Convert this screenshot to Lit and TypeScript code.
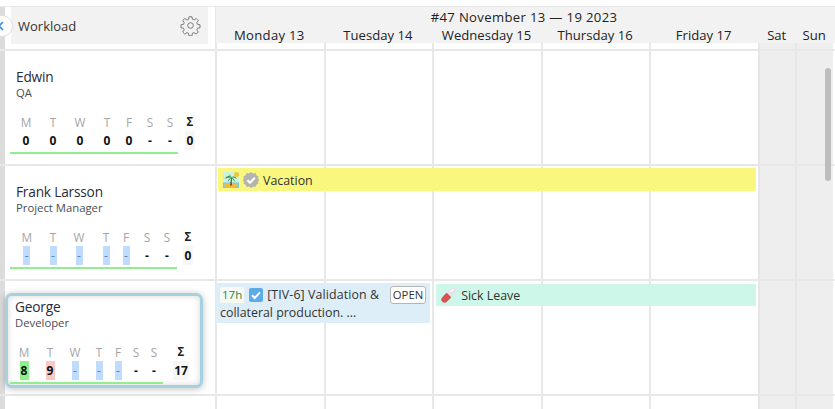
import { LitElement, html, css, svg } from "lit";
import { customElement } from "lit/decorators.js";

interface Person {
  name: string;
  role: string;
  cols: number[];
  lineWidth: number;
  vals: { v: string; k: string }[];
  sum: string;
}
const dash = { v: "-", k: "" };
const off = { v: "-", k: "off" };
const zero = { v: "0", k: "" };
const people: Person[] = [
  { name: "Edwin", role: "QA", cols: [27, 27, 27, 27, 17, 25, 15, 25], lineWidth: 168, vals: [zero, zero, zero, zero, zero, dash, dash], sum: "0" },
  { name: "Frank Larsson", role: "Project Manager", cols: [28.5, 24, 28, 26, 14, 28, 12, 30], lineWidth: 167, vals: [off, off, off, off, off, dash, dash], sum: "0" },
  { name: "George", role: "Developer", cols: [28, 24, 26, 22, 16, 20, 16, 38], lineWidth: 153, vals: [{ v: "8", k: "good" }, { v: "9", k: "bad" }, off, off, off, dash, dash], sum: "17" },
];
const letters = ["M", "T", "W", "T", "F", "S", "S"];
const days = ["Monday 13", "Tuesday 14", "Wednesday 15", "Thursday 16", "Friday 17"];

const palm = svg`<svg class="emoji" viewBox="0 0 16 16"><rect width="16" height="16" rx="1" fill="#cdf1dc"/><circle cx="13.5" cy="2.5" r="2.5" fill="#f7c325"/><rect y="10.5" width="16" height="5.5" fill="#6fcdf0"/><ellipse cx="8" cy="13.3" rx="7" ry="2.4" fill="#f6b93f"/><path d="M7 13.5 C7.5 10 7.8 8 8 5.5 L9 5.5 C8.8 8 8.7 11 9.2 13.5 Z" fill="#7d4f24"/><path d="M8.5 5.5 C6 3 3.5 4 2 7 C4 5.8 6 5.5 8.5 5.5 Z M8.5 5.5 C10.5 3.5 12.5 4.5 14 7 C12 5.8 10.5 5.5 8.5 5.5 Z M8.5 5.5 C7 6 5 7.5 4.5 10 C6 8 7.5 7 8.5 5.5 Z M8.5 5.5 C10 6 11.5 7.5 12 10 C10.5 8 9.5 7 8.5 5.5 Z M8.5 5.5 C7.5 4 6.5 3 5 2.5 C7 2.5 8 3.5 8.5 5.5 Z" fill="#25924d"/></svg>`;
const badge = svg`<svg class="badge" viewBox="0 0 16 16"><path d="M8 0 L10 1.4 L12.4 1.1 L13.4 3.3 L15.5 4.4 L15.1 6.8 L16 8 L15.1 10 L15.5 11.6 L13.4 12.7 L12.4 14.9 L10 14.6 L8 16 L6 14.6 L3.6 14.9 L2.6 12.7 L.5 11.6 L.9 10 L0 8 L.9 6 L.5 4.4 L2.6 3.3 L3.6 1.1 L6 1.4 Z" fill="#b4b4b0"/><path d="M4.4 8.2 L7 10.8 L11.8 5.8" fill="none" stroke="#fff" stroke-width="2"/></svg>`;
const check = svg`<svg class="check" viewBox="0 0 14 14"><rect width="14" height="14" rx="2" fill="#5cabe8"/><path d="M3 7.2 L5.8 10 L11 4.4" fill="none" stroke="#fff" stroke-width="2"/></svg>`;
const pill = svg`<svg class="emoji" viewBox="0 0 16 16"><line x1="3.6" y1="12.4" x2="12.4" y2="3.6" stroke="#e4e2ea" stroke-width="6.4" stroke-linecap="round"/><line x1="3.6" y1="12.4" x2="5.5" y2="10.5" stroke="#d9534f" stroke-width="6.4" stroke-linecap="round"/><line x1="5" y1="11" x2="8" y2="8" stroke="#d9534f" stroke-width="6.4"/><line x1="9" y1="4.2" x2="12.4" y2="2.6" stroke="#fff" stroke-width="1.2" stroke-linecap="round"/></svg>`;
const gear = svg`<svg class="gear" viewBox="0 0 24 24" fill="none" stroke="#777" stroke-width="1.1" stroke-linejoin="round"><circle cx="12" cy="12" r="3.2"/><path d="M10.3 2h3.4l.5 2.9 1.9.8 2.4-1.7 2.4 2.4-1.7 2.4.8 1.9 2.9.5v3.4l-2.9.5-.8 1.9 1.7 2.4-2.4 2.4-2.4-1.7-1.9.8-.5 2.9h-3.4l-.5-2.9-1.9-.8-2.4 1.7-2.4-2.4 1.7-2.4-.8-1.9-2.9-.5v-3.4l2.9-.5.8-1.9-1.7-2.4 2.4-2.4 2.4 1.7 1.9-.8z"/></svg>`;

@customElement("app-root")
export class AppRoot extends LitElement {
  static styles = css`
    :host { display: block; width: 835px; height: 409px; overflow: hidden; background: #fff; font-family: "Open Sans", "Noto Sans", sans-serif; color: #222; position: relative; }
    .page { padding-top: 6px; }
    .top { height: 36px; border-top: 1px solid #e8e8e8; display: grid; grid-template-columns: 215px 1fr; }
    .corner { border-left: 5px solid #dcdcdc; padding-left: 6px; padding-right: 7px; height: 36px; box-sizing: border-box; }
    .wl { height: 37px; background: #f2f2f2; display: flex; align-items: center; justify-content: space-between; padding: 0 7px 0 7px; font-size: 13px; color: #333; }
    .gear { width: 21px; height: 21px; display: block; }
    .back { position: absolute; left: -9px; top: 15px; width: 22px; height: 22px; box-sizing: border-box; border-radius: 50%; background: #fff; border: 1px solid #ddd; display: flex; align-items: center; justify-content: flex-end; }
    .back svg { width: 6px; height: 10px; margin-right: 8px; display: block; }
    .head { background: #f2f2f2; border-left: 1px solid #e8e8e8; height: 36px; font-size: 13.1px; text-align: center; }
    .title { height: 19px; line-height: 21px; letter-spacing: .35px; padding-right: 3px; }
    .row { display: grid; grid-template-columns: 215px repeat(5, 108.6px) 37.5px 37.5px; }
    .hdays { display: grid; grid-template-columns: repeat(5, 108.6px) 37.5px 37.5px; height: 17px; line-height: 18px; margin-left: -1px; }
    .hdays div:first-child { letter-spacing: .3px; }
    .gap { height: 6px; display: grid; grid-template-columns: 215px repeat(5, 108.6px) 37.5px 37.5px; border-bottom: 2px solid #e8e8e8; }
    .gap > div { border-left: 2px solid #e8e8e8; box-sizing: border-box; }
    .gap > div.l { border-left: 5px solid #dcdcdc; }
    .gap > div.we { background: #eee; border-left-color: #e6e6e6; }
    .row { height: 113px; border-bottom: 2px solid #e8e8e8; }
    .left { grid-row: 1; grid-column: 1; border-left: 5px solid #dcdcdc; position: relative; z-index: 1; min-width: 0; }
    .c { grid-row: 1; border-left: 2px solid #e8e8e8; box-sizing: border-box; }
    .c.we { background: #eee; border-left-color: #e6e6e6; }
    .person { padding: 17px 0 0 5px; height: 100%; box-sizing: border-box; }
    .name { font-size: 13.7px; line-height: 17px; color: #2a2a3a; margin-left: 6px; letter-spacing: -.2px; }
    .role { font-size: 11.3px; line-height: 16px; color: #4c4c55; margin-left: 6px; }
    .stats { margin-top: 11px; }
    .grid { display: grid; margin-left: 2.5px; font-size: 11.5px; line-height: 20px; text-align: center; }
    .lb, .sg { height: 19px; }
    .lb { color: #a5a5a5; font-size: 11.8px; }
    .sg { color: #222; font-weight: 700; }
    .v { font-weight: 700; color: #111; font-size: 12px; display: flex; justify-content: center; }
    .v span { display: block; min-width: 7px; padding: 0 1px; box-sizing: border-box; height: 19px; line-height: 20px; }
    .v .off { background: #bfdcff; color: #5c86b8; font-weight: 400; }
    .v .good { background: #8df08d; min-width: 9px; }
    .v .bad { background: #fcc8c4; min-width: 9px; }
    .v .tot { background: #f6f6f6; padding: 0 1.5px; }
    .line { height: 2px; background: #90ee90; margin-top: 2px; }
    .card { margin: 12px 12px 0 0; height: 95px; padding: 2px 0 0 0; border: 3px solid #a6d2df; border-radius: 7px; box-sizing: border-box; box-shadow: 0 1px 7px rgba(0,0,0,.25), inset 0 0 6px rgba(0,0,0,.16); position: relative; background: #fff; }
    .card .name { margin-left: 7px; }
    .card .role { margin-left: 7px; }
    .card .stats { margin-left: 2px; }
    .card .grid { margin-left: 0; }
    .ev { grid-row: 1; font-size: 12.4px; display: flex; align-items: center; color: #333; z-index: 1; align-self: start; box-sizing: border-box; }
    .vac { grid-column: 2 / 7; margin: 2px 1.5px 0 3px; height: 23px; background: #f9f77e; padding-left: 5px; }
    .vac span { padding-top: 1px; }
    .emoji { width: 16px; height: 16px; flex: none; }
    .badge { width: 16px; height: 16px; margin: 0 4px 0 4px; flex: none; }
    .task { grid-column: 2 / 4; margin: 2px 2px 0 1px; height: 40px; background: #deeef8; padding: 3px 4px 0 4px; display: block; line-height: 18px; }
    .t1 { display: flex; align-items: center; height: 18px; }
    .h { background: #f6f9f4; color: #2b8a3e; padding: 0 2px; height: 16px; line-height: 16px; border-radius: 2px; font-size: 11.5px; }
    .check { width: 14px; height: 14px; margin: 0 4px 0 5px; flex: none; }
    .label { letter-spacing: .1px; }
    .open { margin-left: auto; border: 1px solid #b5b5b5; border-radius: 3px; background: #fff; height: 16px; line-height: 16px; padding: 0 2px; font-size: 11.3px; color: #333; }
    .sick { grid-column: 4 / 7; margin: 3px 1.5px 0 4px; height: 22px; background: #cdf7e8; padding-left: 5px; }
    .sick span { margin-left: 4px; }
    .bar { position: absolute; left: 825px; top: 68px; width: 6px; height: 113px; border-radius: 3px; background: #bdbdbd; z-index: 3; }
  `;

  private grid(p: Person) {
    return html`<div class="stats"><div class="grid" style="grid-template-columns:${p.cols.map((c) => c + "px").join(" ")}">
      ${letters.map((l) => html`<div class="lb">${l}</div>`)}<div class="sg">Σ</div>
      ${p.vals.map((x) => html`<div class="v"><span class=${x.k}>${x.v}</span></div>`)}<div class="v"><span class="tot">${p.sum}</span></div>
    </div><div class="line" style="width:${p.lineWidth}px"></div></div>`;
  }

  private cells() {
    return [2, 3, 4, 5, 6, 7, 8].map((n) => html`<div class="c ${n > 6 ? "we" : ""}" style="grid-column:${n}"></div>`);
  }

  render() {
    const [e, f, g] = people;
    return html`<div class="page">
      <div class="top">
        <div class="corner"><div class="wl"><span>Workload</span>${gear}</div></div>
        <div class="head">
          <div class="title">#47 November 13 — 19 2023</div>
          <div class="hdays">${days.map((d) => html`<div>${d}</div>`)}<div>Sat</div><div>Sun</div></div>
        </div>
      </div>
      <div class="gap"><div class="l"></div><div></div><div></div><div></div><div></div><div></div><div class="we"></div><div class="we"></div></div>
      <div class="row">
        <div class="left"><div class="person"><div class="name">${e.name}</div><div class="role">${e.role}</div>${this.grid(e)}</div></div>
        ${this.cells()}
      </div>
      <div class="row">
        <div class="left"><div class="person"><div class="name">${f.name}</div><div class="role">${f.role}</div>${this.grid(f)}</div></div>
        ${this.cells()}
        <div class="ev vac">${palm}${badge}<span>Vacation</span></div>
      </div>
      <div class="row">
        <div class="left"><div class="card"><div class="name">${g.name}</div><div class="role">${g.role}</div>${this.grid(g)}</div></div>
        ${this.cells()}
        <div class="ev task"><div class="t1"><span class="h">17h</span>${check}<span class="label">[TIV-6] Validation &amp;</span><span class="open">OPEN</span></div><div>collateral production. ...</div></div>
        <div class="ev sick">${pill}<span>Sick Leave</span></div>
      </div>
      <div class="row">
        <div class="left"></div>
        ${this.cells()}
      </div>
      <div class="back"><svg viewBox="0 0 6 10"><path d="M5 1 L1 5 L5 9" fill="none" stroke="#3b8ee8" stroke-width="1.6"/></svg></div>
      <div class="bar"></div>
    </div>`;
  }
}
